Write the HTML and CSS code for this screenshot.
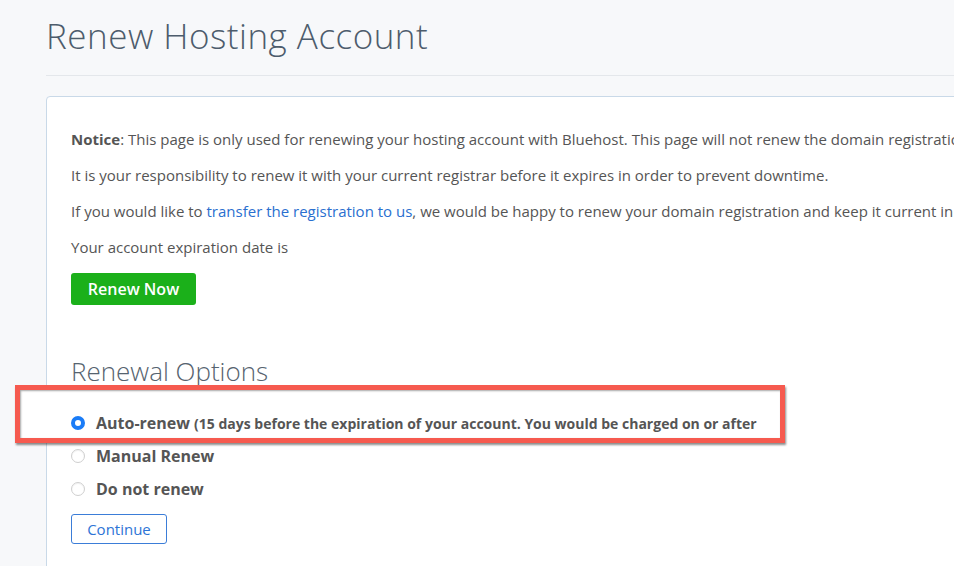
FILE: index.html
```html
<!DOCTYPE html>
<html>
<head>
<meta charset="utf-8">
<link rel="stylesheet" href="styles.css">
</head>
<body>
<div class="page">
  <h1 class="title">Renew Hosting Account</h1>
  <hr class="rule">
  <div class="card">
    <p class="para"><strong>Notice</strong>: This page is only used for renewing your hosting account with Bluehost. This page will not renew the domain registration for your domain name.</p>
    <p class="para">It is your responsibility to renew it with your current registrar before it expires in order to prevent downtime.</p>
    <p class="para">If you would like to <a class="link" href="#">transfer the registration to us</a>, we would be happy to renew your domain registration and keep it current in the future.</p>
    <p class="para">Your account expiration date is</p>
    <button class="btn-renew">Renew Now</button>
    <h2 class="subtitle">Renewal Options</h2>
    <div class="options">
      <label class="option option-top"><span class="radio checked"></span><span class="opt-label">Auto-renew <span class="opt-note">(15 days before the expiration of your account. You would be charged on or after</span></span></label>
      <label class="option"><span class="radio"></span><span class="opt-label">Manual Renew</span></label>
      <label class="option"><span class="radio"></span><span class="opt-label">Do not renew</span></label>
    </div>
    <button class="btn-continue">Continue</button>
  </div>
</div>
<div class="annotation"></div>
</body>
</html>
```
FILE: styles.css
```css
html, body {
  margin: 0;
  padding: 0;
  background: #f7f8fa;
  overflow: hidden;
  height: 566px;
}
body {
  font-family: "Open Sans", "Liberation Sans", sans-serif;
  color: #555;
  position: relative;
}
.page {
  padding-left: 46px;
  width: 1300px;
}
.title {
  margin: 13px 0 0 0;
  font-size: 35px;
  line-height: 46px;
  font-weight: 300;
  letter-spacing: 0.5px;
  color: #4d5c6c;
}
.rule {
  border: 0;
  border-top: 1px solid #e4e7eb;
  margin: 16px 0 0 0;
  height: 0;
}
.card {
  margin-top: 20px;
  background: #fff;
  border: 1px solid #c9d9e8;
  border-radius: 4px;
  padding: 32px 24px 40px 24px;
}
.para {
  margin: 0 0 16px 0;
  font-size: 15px;
  line-height: 20px;
  white-space: nowrap;
}
.para strong {
  font-weight: 700;
}
.link {
  color: #2a6fcf;
  text-decoration: none;
}
.btn-renew {
  display: block;
  font-family: inherit;
  margin-top: 0;
  width: 125px;
  height: 32px;
  background: #1bb01a;
  color: #fff;
  border: 0;
  border-radius: 3px;
  font-size: 16px;
  font-weight: 600;
  padding: 0;
}
.subtitle {
  margin: 49px 0 0 0;
  font-size: 26px;
  line-height: 34px;
  font-weight: 300;
  color: #56636f;
}
.options {
  margin-top: 24px;
  display: flex;
  flex-direction: column;
  gap: 11px;
}
.option {
  display: flex;
  align-items: center;
  gap: 11px;
  height: 22px;
  white-space: nowrap;
}
.option-top {
  position: relative;
  z-index: 2;
}
.radio {
  width: 14px;
  height: 14px;
  border-radius: 50%;
  border: 1px solid #cfcfcf;
  background: #fff;
  box-sizing: border-box;
  flex: none;
  box-shadow: inset 0 1px 1px rgba(0,0,0,0.06);
}
.radio.checked {
  border: 4px solid #1a7cf7;
  background: #fff;
  box-shadow: none;
}
.opt-label {
  font-size: 16px;
  font-weight: 700;
  color: #555;
}
.opt-note {
  font-size: 14px;
}
.btn-continue {
  display: block;
  margin-top: 14px;
  font-family: inherit;
  font-size: 15px;
  color: #2d74d6;
  background: #fff;
  border: 1px solid #3b7dd8;
  border-radius: 3px;
  width: 96px;
  height: 30px;
  padding: 0;
}
.annotation {
  position: absolute;
  z-index: 1;
  left: 15px;
  top: 385px;
  width: 760px;
  height: 48px;
  border: 5px solid #f65a4f;
  box-shadow: 1px 2px 2px rgba(0,0,0,0.45), inset 1px 1px 2px rgba(0,0,0,0.35);
  background: #fff;
  pointer-events: none;
}
```
